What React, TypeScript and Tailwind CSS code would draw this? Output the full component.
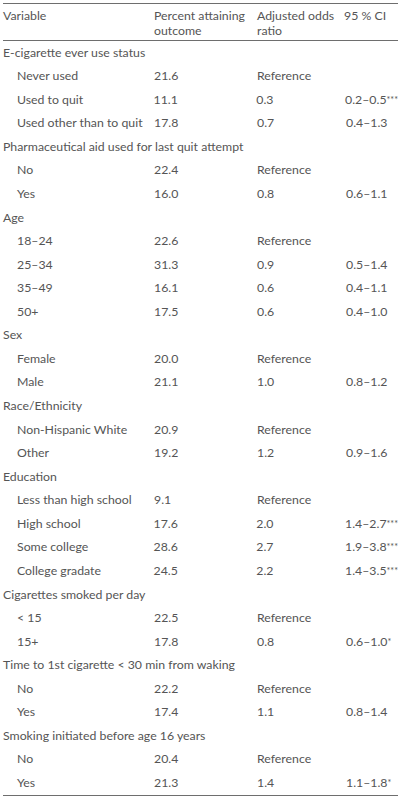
const ROWS: [string, boolean, string, string, string][] = [
  ["E-cigarette ever use status", false, "", "", ""],
  ["Never used", true, "21.6", "Reference", ""],
  ["Used to quit", true, "11.1", "0.3", "0.2–0.5***"],
  ["Used other than to quit", true, "17.8", "0.7", "0.4–1.3"],
  ["Pharmaceutical aid used for last quit attempt", false, "", "", ""],
  ["No", true, "22.4", "Reference", ""],
  ["Yes", true, "16.0", "0.8", "0.6–1.1"],
  ["Age", false, "", "", ""],
  ["18–24", true, "22.6", "Reference", ""],
  ["25–34", true, "31.3", "0.9", "0.5–1.4"],
  ["35–49", true, "16.1", "0.6", "0.4–1.1"],
  ["50+", true, "17.5", "0.6", "0.4–1.0"],
  ["Sex", false, "", "", ""],
  ["Female", true, "20.0", "Reference", ""],
  ["Male", true, "21.1", "1.0", "0.8–1.2"],
  ["Race/Ethnicity", false, "", "", ""],
  ["Non-Hispanic White", true, "20.9", "Reference", ""],
  ["Other", true, "19.2", "1.2", "0.9–1.6"],
  ["Education", false, "", "", ""],
  ["Less than high school", true, "9.1", "Reference", ""],
  ["High school", true, "17.6", "2.0", "1.4–2.7***"],
  ["Some college", true, "28.6", "2.7", "1.9–3.8***"],
  ["College gradate", true, "24.5", "2.2", "1.4–3.5***"],
  ["Cigarettes smoked per day", false, "", "", ""],
  ["< 15", true, "22.5", "Reference", ""],
  ["15+", true, "17.8", "0.8", "0.6–1.0*"],
  ["Time to 1st cigarette < 30 min from waking", false, "", "", ""],
  ["No", true, "22.2", "Reference", ""],
  ["Yes", true, "17.4", "1.1", "0.8–1.4"],
  ["Smoking initiated before age 16 years", false, "", "", ""],
  ["No", true, "20.4", "Reference", ""],
  ["Yes", true, "21.3", "1.4", "1.1–1.8*"],
];

function Ci({ text }: { text: string }) {
  const m = text.match(/^([^*]*)(\**)$/);
  const base = m ? m[1] : text;
  const stars = m ? m[2] : "";
  return (
    <span>
      {base}
      {stars && <sup className="text-[9px] relative -top-[1px]">{stars}</sup>}
    </span>
  );
}

export default function App() {
  return (
    <div
      className="bg-white w-[408px] h-[800px] overflow-hidden text-[#555] text-[12.3px] whitespace-nowrap"
      style={{ fontFamily: "Lato, 'Open Sans', sans-serif" }}
    >
      <div className="ml-[3px] w-[395px] mt-[3px] border-t border-[#6e6e6e]">
        <div className="flex pt-[4px] h-[37px] leading-[15px] border-b border-[#6e6e6e]">
          <div className="w-[151px]">Variable</div>
          <div className="w-[103px]">
            Percent attaining
            <br />
            outcome
          </div>
          <div className="w-[83px]">
            Adjusted odds
            <br />
            ratio
          </div>
          <div className="flex-1 pl-[4px]">95 % CI</div>
        </div>
        <div className="border-b border-[#6e6e6e]">
          {ROWS.map(([label, sub, pct, or, ci], i) => (
            <div key={i} className="flex items-center h-[23.57px]">
              {sub ? (
                <>
                  <div className="w-[151px] pl-[14px]">{label}</div>
                  <div className="w-[103px]">{pct}</div>
                  <div className="w-[83px]">{or}</div>
                  <div className="flex-1 pl-[6px]">{ci && <Ci text={ci} />}</div>
                </>
              ) : (
                <div>{label}</div>
              )}
            </div>
          ))}
        </div>
      </div>
    </div>
  );
}
